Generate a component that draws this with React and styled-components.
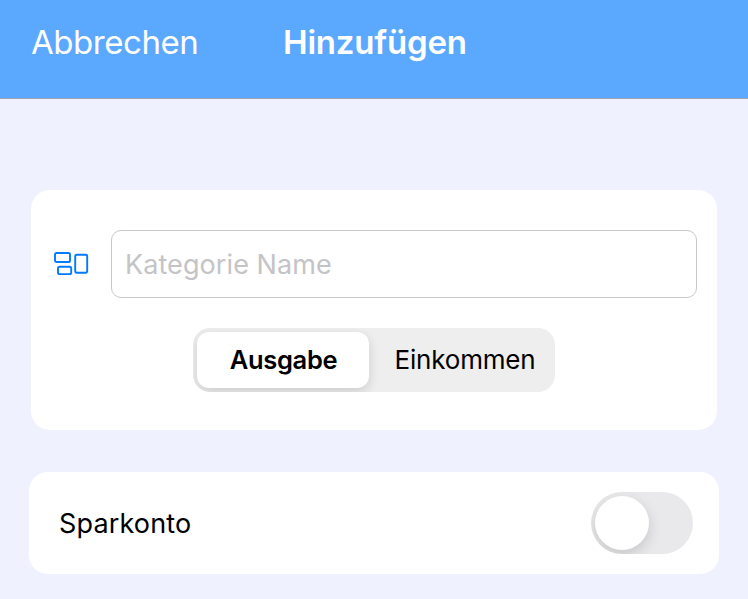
import React from "react";
import styled, { createGlobalStyle } from "styled-components";

const Global = createGlobalStyle`
  * { box-sizing: border-box; }
  body { margin: 0; background: #eff1ff; font-family: Inter, "Liberation Sans", sans-serif; color: #000; }
  button, input { font: inherit; color: inherit; border: 0; margin: 0; padding: 0; background: none; }
`;
const Page = styled.main`width: 100%; height: 599px; overflow: hidden; background: #eff1ff;`;
const Header = styled.header`
  height: 99px; padding: 21px 31px 0; display: flex; align-items: flex-start; gap: 86px;
  background: #5ba8ff; border-bottom: 1px solid #a0a3ad; color: #fff;
`;
const Cancel = styled.button`
  && { width: 166px; white-space: nowrap; text-align: left; font-size: 33px; line-height: 42px; letter-spacing: -0.45px; }
`;
const Title = styled.h1`
  margin: 0; font-size: 33px; line-height: 42px; font-weight: 600; letter-spacing: -0.2px;
`;
const Card = styled.section`
  margin: 91px 31px 0; height: 240px; padding: 40px 20px 0; border-radius: 19px; background: #fff;
  display: flex; flex-direction: column; align-items: center; gap: 30px;
`;
const Field = styled.div`width: 100%; padding-left: 3px; display: flex; align-items: center; justify-content: space-between;`;
const NameInput = styled.input`
  && { width: 586px; height: 68px; border: 1px solid #c8c8c8; border-radius: 10px; padding: 0 13px; font-size: 27px; letter-spacing: 0.08px; background: #fff; }
  &::placeholder { color: #c4c4c6; opacity: 1; }
`;
const Segments = styled.div`
  width: 362px; height: 64px; padding: 4px; border-radius: 17px; background: #eee; display: flex; overflow: hidden;
`;
const Segment = styled.button`
  && {
    width: ${p => p.$active ? "172px" : "182px"}; height: 56px; border-radius: 12px;
    font-size: ${p => p.$active ? "25.5px" : "26px"};
    padding: ${p => p.$active ? "0 0 1px 1px" : "0 0 1px 10px"};
    letter-spacing: ${p => p.$active ? "-0.3px" : "-0.2px"};
    font-weight: ${p => p.$active ? 600 : 400};
    background: ${p => p.$active ? "#fff" : "transparent"};
    box-shadow: ${p => p.$active ? "0 4px 12px rgba(0,0,0,.14)" : "none"};
  }
`;
const Row = styled.section`
  margin: 42px 29px 0; height: 102px; padding: 0 26px 0 30px; border-radius: 19px; background: #fff;
  display: flex; align-items: center; justify-content: space-between; font-size: 27px; letter-spacing: 0.15px;
`;
const Switch = styled.button`
  && { width: 102px; height: 62px; padding: 4px; border-radius: 31px; background: #e9e9eb; display: flex; overflow: hidden; }
`;
const Knob = styled.span`width: 54px; height: 54px; border-radius: 50%; background: #fff; box-shadow: 0 5px 14px rgba(0,0,0,.15);`;

const CategoryIcon = () => (
  <svg width="36" height="24" viewBox="0 0 36 24" fill="none" stroke="#007aff" strokeWidth="1.9">
    <rect x="1" y="1" width="15" height="9" rx="1.6" />
    <rect x="4" y="14.7" width="13.2" height="7.4" rx="1.6" />
    <rect x="21.2" y="2.7" width="12" height="18" rx="1.6" />
  </svg>
);

export default function App() {
  return (
    <Page>
      <Global />
      <Header><Cancel>Abbrechen</Cancel><Title>Hinzufügen</Title></Header>
      <Card>
        <Field><CategoryIcon /><NameInput placeholder="Kategorie Name" /></Field>
        <Segments><Segment $active>Ausgabe</Segment><Segment>Einkommen</Segment></Segments>
      </Card>
      <Row><span>Sparkonto</span><Switch role="switch" aria-checked="false" aria-label="Sparkonto"><Knob /></Switch></Row>
    </Page>
  );
}
